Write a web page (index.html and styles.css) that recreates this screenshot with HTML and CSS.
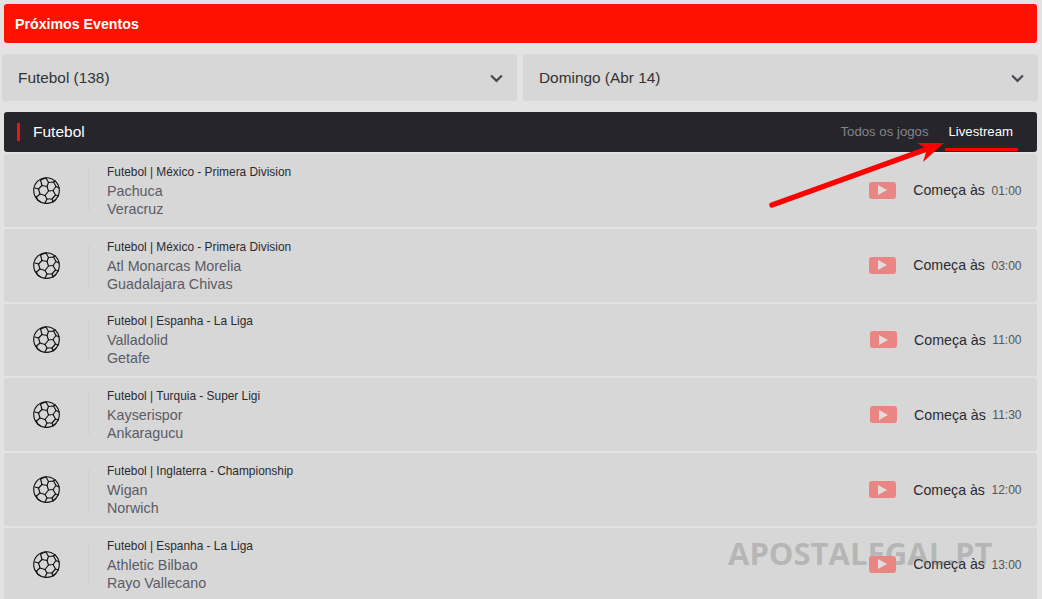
FILE: index.html
```html
<!DOCTYPE html>
<html lang="pt">
<head>
<meta charset="utf-8">
<title>Próximos Eventos</title>
<link rel="stylesheet" href="styles.css">
</head>
<body>
<svg width="0" height="0" class="defs">
  <symbol id="ball" viewBox="0 0 27 27">
    <g fill="none" stroke="#111" stroke-width="1.15" stroke-linejoin="round" stroke-linecap="round">
      <circle cx="13.5" cy="13.5" r="12.8"/>
      <path d="M5.500 12L9 8.500l5 1 1.500 4.500-3.500 4.500-5-1.500z"/>
      <path d="M14 9.500l1.500-4 5-.5 2.500 4.500-3 4-4.500.5"/>
      <path d="M20 13.500l2.500 4.500-3.500 4h-5l-2-3.500"/>
      <path d="M5.500 12L2 11M9 8.500L7.500 3M15.500 5.500L13 1M20.500 5L22 3.500M23 9.500l3 1.500M22.500 18l3 1M19 22l1 3M14 22l-2 4M7 17l-3.500 3"/>
      <path d="M7.500 3l5.500-2M3.500 20l1 3 3 2M20 25l3-2.500"/>
    </g>
  </symbol>
</svg>
<main class="page">
  <header class="title-bar">Próximos Eventos</header>
  <div class="filters">
    <div class="select"><span>Futebol (138)</span><svg class="chev" viewBox="0 0 12 8"><path d="M1 1.200l5 5 5-5"/></svg></div>
    <div class="select"><span>Domingo (Abr 14)</span><svg class="chev" viewBox="0 0 12 8"><path d="M1 1.200l5 5 5-5"/></svg></div>
  </div>
  <section class="sport">
    <div class="sport-bar">
      <div class="sport-name">Futebol</div>
      <nav class="tabs"><a class="tab">Todos os jogos</a><a class="tab active">Livestream</a></nav>
    </div>
    <article class="row">
      <div class="ball-cell"><svg class="ball"><use href="#ball"/></svg></div>
      <div class="info"><div class="league">Futebol | México - Primera Division</div><div class="team">Pachuca</div><div class="team">Veracruz</div></div>
      <div class="yt"><i></i></div><div class="starts">Começa às</div><div class="time">01:00</div>
    </article>
    <article class="row">
      <div class="ball-cell"><svg class="ball"><use href="#ball"/></svg></div>
      <div class="info"><div class="league">Futebol | México - Primera Division</div><div class="team">Atl Monarcas Morelia</div><div class="team">Guadalajara Chivas</div></div>
      <div class="yt"><i></i></div><div class="starts">Começa às</div><div class="time">03:00</div>
    </article>
    <article class="row">
      <div class="ball-cell"><svg class="ball"><use href="#ball"/></svg></div>
      <div class="info"><div class="league">Futebol | Espanha - La Liga</div><div class="team">Valladolid</div><div class="team">Getafe</div></div>
      <div class="yt"><i></i></div><div class="starts">Começa às</div><div class="time">11:00</div>
    </article>
    <article class="row">
      <div class="ball-cell"><svg class="ball"><use href="#ball"/></svg></div>
      <div class="info"><div class="league">Futebol | Turquia - Super Ligi</div><div class="team">Kayserispor</div><div class="team">Ankaragucu</div></div>
      <div class="yt"><i></i></div><div class="starts">Começa às</div><div class="time">11:30</div>
    </article>
    <article class="row">
      <div class="ball-cell"><svg class="ball"><use href="#ball"/></svg></div>
      <div class="info"><div class="league">Futebol | Inglaterra - Championship</div><div class="team">Wigan</div><div class="team">Norwich</div></div>
      <div class="yt"><i></i></div><div class="starts">Começa às</div><div class="time">12:00</div>
    </article>
    <article class="row">
      <div class="ball-cell"><svg class="ball"><use href="#ball"/></svg></div>
      <div class="info"><div class="league">Futebol | Espanha - La Liga</div><div class="team">Athletic Bilbao</div><div class="team">Rayo Vallecano</div></div>
      <div class="yt"><i></i></div><div class="starts">Começa às</div><div class="time">13:00</div>
    </article>
  </section>
</main>
<svg class="arrow" viewBox="0 0 190 80"><path class="shaft" d="M5 65L160 9"/><path class="head" d="M177 3H150l10 6-4 13z"/></svg>
<div class="watermark">APOSTALEGAL.PT</div>
</body>
</html>
```
FILE: styles.css
```css
html, body {
  margin: 0;
  height: 599px;
  overflow: hidden;
  background: #e3e3e3;
  font-family: "Liberation Sans", Arial, sans-serif;
}
body { position: relative; }
.defs { position: absolute; }
.page { padding-top: 4px; }
.title-bar {
  margin: 0 5px 0 4px;
  height: 39px;
  line-height: 40px;
  padding-left: 11px;
  background: #ff1100;
  color: #fff;
  font-size: 14.200px;
  font-weight: 700;
  border-radius: 3px;
}
.filters {
  display: flex;
  gap: 6px;
  margin: 11px 4px 11px 2px;
}
.select {
  flex: 1;
  height: 47px;
  display: flex;
  align-items: center;
  justify-content: space-between;
  padding: 0 14px 0 16px;
  background: #d7d7d7;
  color: #333;
  font-size: 15.400px;
  border-radius: 3px;
}
.chev { width: 13px; height: 9px; margin-top: 2px; }
.chev path { fill: none; stroke: #4a4a55; stroke-width: 2; }
.sport { margin: 0 5px 0 4px; }
.sport-bar {
  height: 40px;
  display: flex;
  align-items: center;
  justify-content: space-between;
  background: #25252b;
  border-radius: 3px;
  padding: 0 24px 0 13px;
}
.sport-name {
  color: #fff;
  font-size: 15.500px;
  line-height: 18px;
  padding-left: 13px;
  border-left: 3px solid #f01508;
}
.tabs { display: flex; height: 40px; gap: 20px; }
.tab {
  font-size: 13.200px;
  line-height: 39px;
  color: #85858a;
  position: relative;
}
.tab.active { color: #fff; }
.tab.active::after {
  content: "";
  position: absolute;
  left: -4px;
  right: -5px;
  bottom: 1px;
  height: 3px;
  background: #ff0000;
}
.row {
  height: 72.800px;
  margin-top: 2px;
  display: flex;
  align-items: center;
  background: #d7d7d7;
  border-radius: 3px;
  padding-right: 15.500px;
  box-sizing: border-box;
}
.ball-cell {
  width: 84px;
  height: 41px;
  display: flex;
  align-items: center;
  justify-content: center;
  border-right: 1px solid #cfcfcf;
}
.ball { width: 27px; height: 27px; margin-left: 1px; }
.info { flex: 1; padding-left: 18px; margin-top: 2px; }
.league {
  font-size: 11.900px;
  line-height: 14px;
  color: #2a2a30;
  margin-bottom: 3px;
}
.team {
  font-size: 14.300px;
  line-height: 18px;
  color: #5b5b66;
}
.yt {
  width: 27px;
  height: 17px;
  background: #e98583;
  border-radius: 3px;
  display: flex;
  align-items: center;
  justify-content: center;
  margin-right: 17px;
  position: relative;
  z-index: 2;
}
.yt i {
  width: 0;
  height: 0;
  border-style: solid;
  border-width: 5px 0 5px 9px;
  border-color: transparent transparent transparent #e3dcdc;
}
.starts { font-size: 14.200px; color: #2a2a32; margin-right: 6.500px; }
.time { font-size: 12px; color: #555; margin-top: 1px; }
.arrow {
  position: absolute;
  left: 767px;
  top: 140px;
  width: 190px;
  height: 80px;
}
.shaft { stroke: #ff0000; stroke-width: 5.500; stroke-linecap: round; fill: none; }
.head { fill: #ff0000; }
.watermark {
  position: absolute;
  left: 728px;
  top: 533px;
  font-family: "Open Sans", sans-serif;
  font-weight: 700;
  font-size: 31px;
  line-height: 40px;
  color: rgba(110, 110, 110, 0.32);
  z-index: 1;
  white-space: nowrap;
}
```
